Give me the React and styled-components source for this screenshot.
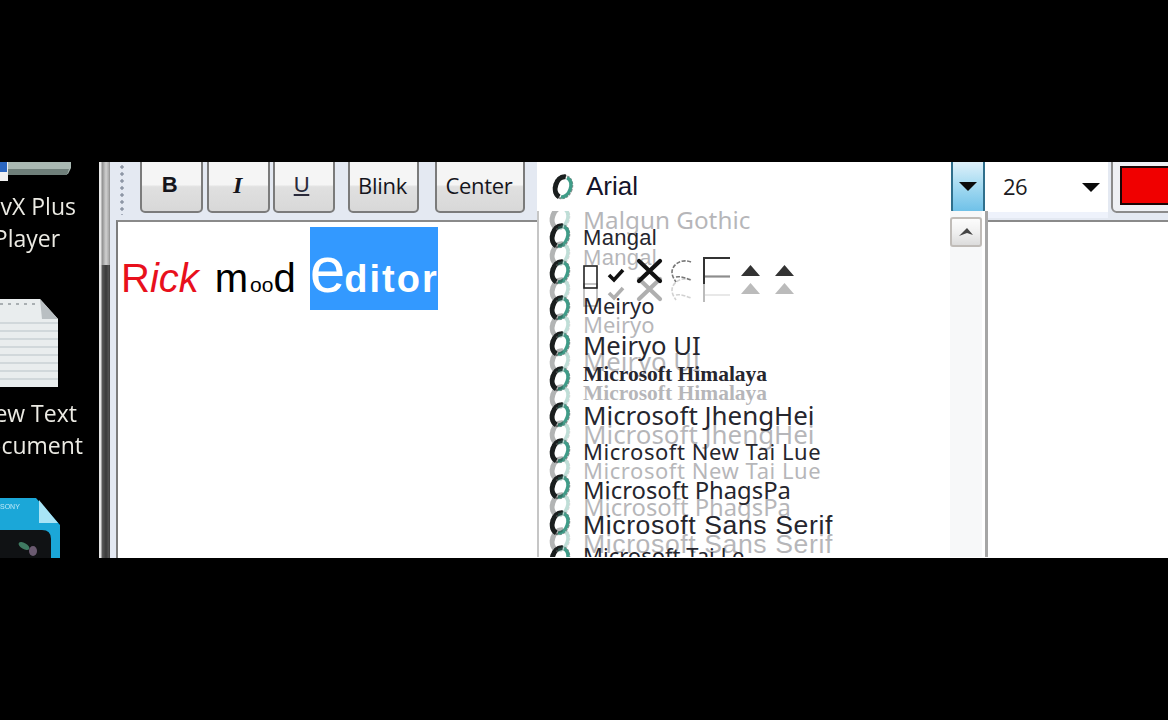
import React from 'react';
import styled, { createGlobalStyle } from 'styled-components';

const GlobalStyle = createGlobalStyle`
  html, body {
    margin: 0;
    padding: 0;
    background: #000;
  }
`;

const Page = styled.div`
  width: 1168px;
  height: 720px;
  background: #000;
  overflow: hidden;
`;

// the video frame, black bars above and below
const Video = styled.div`
  display: flex;
  width: 1168px;
  height: 396px;
  margin-top: 162px;
  overflow: hidden;
  filter: blur(0.55px);
  font-family: "Open Sans", "Liberation Sans", sans-serif;
`;

const Desktop = styled.div`
  flex: none;
  width: 99px;
  overflow: hidden;
`;

const DesktopColumn = styled.div`
  display: flex;
  flex-direction: column;
  align-items: center;
  width: 114px;
  margin-left: -30px;
`;

const IconLabel = styled.div`
  width: 114px;
  margin-top: ${(p) => p.$top}px;
  font-size: 23px;
  line-height: 32px;
  text-align: center;
  color: #ecebe4;
`;

const DesktopIcon = styled.svg`
  display: block;
  flex: none;
  margin-top: ${(p) => p.$top}px;
`;

const Frame = styled.div`
  flex: none;
  display: flex;
  flex-direction: column;
  width: 11px;
`;

const FrameTop = styled.div`
  height: 103px;
  background: linear-gradient(90deg, #e8e8e8 0, #e8e8e8 2px, #8e8e8e 3px, #d0d0d0 7px, #a8a8a8 10px, #8c8c8c 11px);
`;

const FrameBottom = styled.div`
  flex: 1;
  background: linear-gradient(90deg, #e4e4e4 0, #e4e4e4 2px, #5a5a5a 3px, #3a3a3a 7px, #555 10px, #333 11px);
`;

const Body = styled.div`
  flex: 1;
  display: flex;
  flex-direction: column;
  min-width: 0;
  background: #e4e9f2;
`;

const Toolbar = styled.div`
  flex: none;
  display: flex;
  align-items: flex-start;
  height: 58px;
`;

const Grip = styled.div`
  flex: none;
  width: 4px;
  height: 50px;
  margin: 3px 16px 0 10px;
  background: radial-gradient(circle at 2px 2px, #8d96a5 1.4px, transparent 2px) 0 0 / 4px 7px;
`;

const ToolButton = styled.button`
  flex: none;
  display: flex;
  align-items: center;
  justify-content: center;
  box-sizing: border-box;
  width: ${(p) => p.$width}px;
  height: 59px;
  margin: -8px 0 0 ${(p) => p.$left}px;
  padding: 3px 2px 0 0;
  border: 2px solid #7b7b7b;
  border-radius: 5px;
  background: linear-gradient(180deg, #f5f5f5 0, #f5f5f5 52%, #e0e0e0 56%, #d8d8d8 100%);
  color: #15151c;
  font-family: "Open Sans", sans-serif;
  font-size: 22px;
  letter-spacing: -0.3px;
`;

const BoldGlyph = styled.span`
  margin-right: 2px;
  font-family: "Liberation Sans", sans-serif;
  font-weight: 700;
`;

const ItalicGlyph = styled.span`
  font-family: "Liberation Serif", serif;
  font-style: italic;
  font-weight: 700;
  font-size: 24px;
`;

const UnderGlyph = styled.span`
  margin-right: 3px;
  font-family: "Liberation Sans", sans-serif;
  text-decoration: underline;
  color: #2a2a3a;
`;

const FontCombo = styled.div`
  position: relative;
  flex: none;
  display: flex;
  align-items: center;
  box-sizing: border-box;
  width: 448px;
  height: 51px;
  margin-left: 12px;
  padding-left: 14px;
  border-bottom: 2px solid #8fa5a8;
  background: #fff;
`;

const ComboText = styled.span`
  margin-left: 11px;
  font-family: "Liberation Sans", sans-serif;
  font-size: 26px;
  color: #14142a;
`;

const DropButton = styled.div`
  position: absolute;
  top: 0;
  right: 0;
  bottom: -2px;
  display: flex;
  align-items: center;
  justify-content: center;
  width: 34px;
  box-sizing: border-box;
  border: 2px solid #2f6f8c;
  border-top: 0;
  border-radius: 0 0 3px 3px;
  background: linear-gradient(180deg, #dff1fa 0, #a9dcf2 45%, #6fc1e8 100%);
`;

const Caret = styled.span`
  display: block;
  width: 0;
  height: 0;
  border-left: 9px solid transparent;
  border-right: 9px solid transparent;
  border-top: 9px solid #0a0a0a;
`;

const SizeCombo = styled.div`
  flex: none;
  display: flex;
  align-items: center;
  justify-content: space-between;
  box-sizing: border-box;
  width: 123px;
  height: 50px;
  padding: 0 8px 0 18px;
  background: #fff;
  box-shadow: 0 6px 0 #eef2fb;
  color: #1b1b22;
  font-family: "Open Sans", sans-serif;
  font-size: 22px;
  letter-spacing: -0.5px;
`;

const SizeValue = styled.span`
  margin-bottom: 3px;
`;

const ColorButton = styled.div`
  flex: 1;
  box-sizing: border-box;
  height: 59px;
  margin: -8px -12px 0 3px;
  padding: 10px 7px 6px;
  border: 2px solid #8b8b8b;
  border-radius: 6px;
  background: #eef0f4;
`;

const ColorSwatch = styled.div`
  height: 100%;
  box-sizing: border-box;
  border: 2px solid #1a0505;
  background: #f00000;
`;

const Editor = styled.div`
  flex: 1;
  margin-left: 6px;
  padding: 5px 0 0 3px;
  border-top: 2px solid #8a8a8a;
  border-left: 2px solid #7d7d7d;
  background: #fff;
  font-family: "Liberation Sans", sans-serif;
`;

const EditorLine = styled.div`
  display: flex;
  align-items: baseline;
  font-size: 40px;
  line-height: 83px;
`;

const Word = styled.span`
  flex: none;
  margin-left: ${(p) => p.$left}px;
  color: ${(p) => p.$color};
`;

const Slant = styled.em`
  font-style: italic;
`;

const Tiny = styled.span`
  padding-left: 2px;
  font-size: 21px;
`;

const Selection = styled.span`
  flex: none;
  box-sizing: border-box;
  width: 128px;
  height: 83px;
  margin-left: 14px;
  overflow: hidden;
  background: #3399ff;
  color: #fff;
  line-height: 87px;
  white-space: nowrap;
`;

const BigLetter = styled.span`
  font-size: 64px;
  letter-spacing: -1px;
`;

const SelectedRest = styled.span`
  font-size: 38px;
  font-weight: 700;
  letter-spacing: 2px;
`;

const Dropdown = styled.div`
  position: absolute;
  z-index: 2;
  top: 100%;
  left: 0;
  display: flex;
  box-sizing: border-box;
  width: 451px;
  height: 346px;
  border-left: 2px solid #c6c6c6;
  border-right: 3px solid #a6a6a6;
  background: #fff;
`;

const FontList = styled.div`
  flex: 1;
  min-width: 0;
  overflow: hidden;
`;

const FontRows = styled.div`
  margin-top: -1.6px;
`;

const FontRow = styled.div`
  display: flex;
  align-items: center;
  height: 17.9px;
  padding-left: 9px;
  white-space: nowrap;
  opacity: ${(p) => (p.$faint ? 0.33 : 1)};
`;

const FontName = styled.span`
  margin: ${(p) => p.$shift * 2}px 0 0 11px;
  font-family: ${(p) => p.$font};
  font-size: ${(p) => p.$size}px;
  font-weight: ${(p) => p.$weight || 400};
  letter-spacing: ${(p) => p.$spacing || 0}px;
  line-height: 18px;
  color: #26262e;
`;

const TypeIcon = styled.svg`
  flex: none;
  display: block;
  overflow: visible;
`;

const GlyphStrip = styled.svg`
  flex: none;
  display: block;
  margin-left: 11px;
  overflow: visible;
`;

const Scroller = styled.div`
  flex: none;
  width: 32px;
  margin-right: 3px;
  padding-top: 6px;
  background: #f7f8f9;
`;

const ScrollUp = styled.div`
  display: flex;
  align-items: center;
  justify-content: center;
  box-sizing: border-box;
  height: 30px;
  border: 2px solid #c0bcb8;
  border-radius: 3px;
  background: linear-gradient(180deg, #fcfcfc 0, #f0f0f0 50%, #dcdcdc 100%);
`;

const sans = '"Liberation Sans", sans-serif';
const serif = '"Liberation Serif", serif';
const noto = '"Noto Sans", sans-serif';

// list of fonts as the combo shows them, every row has a fainter ghost below it
const fonts = [
  { name: 'Malgun Gothic', font: noto, size: 24.3, ghostShift: 2 },
  { name: 'Mangal', font: sans, size: 22, shift: 2, ghostShift: 4, spacing: 0.3 },
  { glyphs: true },
  { name: 'Meiryo', font: noto, size: 22, shift: -3, ghostShift: -2 },
  { name: 'Meiryo UI', font: noto, size: 25.7, shift: 2, ghostShift: 1 },
  { name: 'Microsoft Himalaya', font: serif, size: 21.5, shift: -5, ghostShift: -4, weight: 700 },
  { name: 'Microsoft JhengHei', font: noto, size: 25.9, shift: 0, ghostShift: 1 },
  { name: 'Microsoft New Tai Lue', font: noto, size: 22, shift: 0, ghostShift: 1, spacing: 0.55 },
  { name: 'Microsoft PhagsPa', font: noto, size: 23.8, shift: 3, ghostShift: 2 },
  { name: 'Microsoft Sans Serif', font: sans, size: 26.6, shift: 2, ghostShift: 4, spacing: 0.6 },
  { name: 'Microsoft Tai Le', font: noto, size: 22, shift: -3, ghostShift: 0 },
];

const rows = fonts
  .flatMap((f) => [{ ...f, faint: false }, { ...f, faint: true, shift: f.ghostShift }])
  .slice(1, -1);

const OpenTypeIcon = () => (
  <TypeIcon width="24" height="26" viewBox="0 0 24 26">
    <g transform="rotate(18 12 13)" fill="none">
      <ellipse cx="12" cy="13" rx="9" ry="11.500" stroke="#8d8d8d" strokeWidth="2" strokeDasharray="2.500 1" />
      <path d="M11.500 2.500C6 3.500 4.500 9 4.500 13C4.500 18 7 22.500 11.500 23.500" stroke="#1a1e1e" strokeWidth="5" />
      <path d="M13 3C18 4 19.500 9 19.500 13C19.500 18 17 22.500 13 23" stroke="#3f9c88" strokeWidth="3.400" />
    </g>
  </TypeIcon>
);

const MarlettGlyphs = () => (
  <GlyphStrip width="212" height="48" viewBox="0 0 212 48">
    <rect x="1" y="18" width="13" height="22" fill="none" stroke="#222" strokeWidth="1.6" />
    <path d="M26 27l5 5 9-10" fill="none" stroke="#111" strokeWidth="3.6" />
    <path d="M56 13l21 20M77 13l-21 20" fill="none" stroke="#111" strokeWidth="4.2" strokeLinecap="round" />
    <path d="M108 14C98 10 89 17 89 24C89 28 91 31 93 34M93 29C97 28 103 30 108 32" fill="none" stroke="#777" strokeWidth="1.6" strokeDasharray="4 1.5" />
    <path d="M121 36V10H147" fill="none" stroke="#333" strokeWidth="2" />
    <path d="M122 29H147" fill="none" stroke="#aaa" strokeWidth="1.6" />
    <path d="M158 28l9.500-11 9.500 11zM192 28l9.500-11 9.500 11z" fill="#333" />
  </GlyphStrip>
);

const DivxIcon = () => (
  <DesktopIcon width="88" height="20" viewBox="-2 0 88 20" $top={0}>
    <rect x="-2" y="0" width="25" height="19" fill="#f0f0f0" />
    <rect x="15" y="0" width="7" height="10" fill="#2a66c0" />
    <path d="M23 0H86V6L83 12H23Z" fill="#a9b8b2" />
    <path d="M23 7H84L82 13H23Z" fill="#6f7f7a" />
  </DesktopIcon>
);

const NotepadIcon = () => (
  <DesktopIcon width="62" height="92" viewBox="-2 0 62 92" $top={45}>
    <path d="M-2 0H42L60 20V88H-2Z" fill="#e9edee" />
    <path d="M42 0L60 20H44Z" fill="#b9bfc2" />
    <path d="M2 5H40" stroke="#a9afb2" strokeWidth="2" strokeDasharray="3 5" />
    {[24, 32, 40, 48, 56, 64, 72, 80].map((y) => (
      <path key={y} d={`M-2 ${y}H60`} stroke="#c8d0d4" strokeWidth="1.5" />
    ))}
  </DesktopIcon>
);

const CameraIcon = () => (
  <DesktopIcon width="66" height="80" viewBox="0 0 66 80" $top={37}>
    <path d="M0 0H42L66 27V80H0Z" fill="#1ba7d8" />
    <path d="M45 2L64 25H45Z" fill="#a8e4f6" />
    <path d="M0 32H48Q57 32 57 41V80H0Z" fill="#101214" />
    <ellipse cx="30" cy="48" rx="6" ry="3" fill="#3f7a62" transform="rotate(30 30 48)" />
    <ellipse cx="39" cy="53" rx="4" ry="5" fill="#6a5a70" />
    <text x="6" y="11" fontSize="7" fill="#bfe9f7" fontFamily="Liberation Sans">SONY</text>
  </DesktopIcon>
);

export default function App() {
  return (
    <Page>
      <GlobalStyle />
      <Video>
        <Desktop>
          <DesktopColumn>
            <DivxIcon />
            <IconLabel $top={8}>DivX Plus<br />Player</IconLabel>
            <NotepadIcon />
            <IconLabel $top={6}>New Text<br />Document</IconLabel>
            <CameraIcon />
          </DesktopColumn>
        </Desktop>
        <Frame>
          <FrameTop />
          <FrameBottom />
        </Frame>
        <Body>
          <Toolbar>
            <Grip />
            <ToolButton $width={63} $left={0}><BoldGlyph>B</BoldGlyph></ToolButton>
            <ToolButton $width={63} $left={4}><ItalicGlyph>I</ItalicGlyph></ToolButton>
            <ToolButton $width={62} $left={3}><UnderGlyph>U</UnderGlyph></ToolButton>
            <ToolButton $width={71} $left={13}>Blink</ToolButton>
            <ToolButton $width={90} $left={16}>Center</ToolButton>
            <FontCombo>
              <OpenTypeIcon />
              <ComboText>Arial</ComboText>
              <DropButton><Caret /></DropButton>
              <Dropdown>
                <FontList>
                  <FontRows>
                    {rows.map((r, i) => (
                      <FontRow key={i} $faint={r.faint}>
                        <OpenTypeIcon />
                        {r.glyphs ? (
                          <MarlettGlyphs />
                        ) : (
                          <FontName
                            $font={r.font}
                            $size={r.size}
                            $weight={r.weight}
                            $spacing={r.spacing}
                            $shift={r.shift || 0}
                          >
                            {r.name}
                          </FontName>
                        )}
                      </FontRow>
                    ))}
                  </FontRows>
                </FontList>
                <Scroller>
                  <ScrollUp>
                    <svg width="16" height="10" viewBox="0 0 16 10">
                      <path d="M1 9L9 1L15 8L9 6Z" fill="#444" />
                    </svg>
                  </ScrollUp>
                </Scroller>
              </Dropdown>
            </FontCombo>
            <SizeCombo>
              <SizeValue>26</SizeValue>
              <Caret />
            </SizeCombo>
            <ColorButton><ColorSwatch /></ColorButton>
          </Toolbar>
          <Editor>
            <EditorLine>
              <Word $color="#e8101c">R<Slant>ick</Slant></Word>
              <Word $left={16} $color="#000">m<Tiny>oo</Tiny>d</Word>
              <Selection>
                <BigLetter>e</BigLetter>
                <SelectedRest>ditor</SelectedRest>
              </Selection>
            </EditorLine>
          </Editor>
        </Body>
      </Video>
    </Page>
  );
}
